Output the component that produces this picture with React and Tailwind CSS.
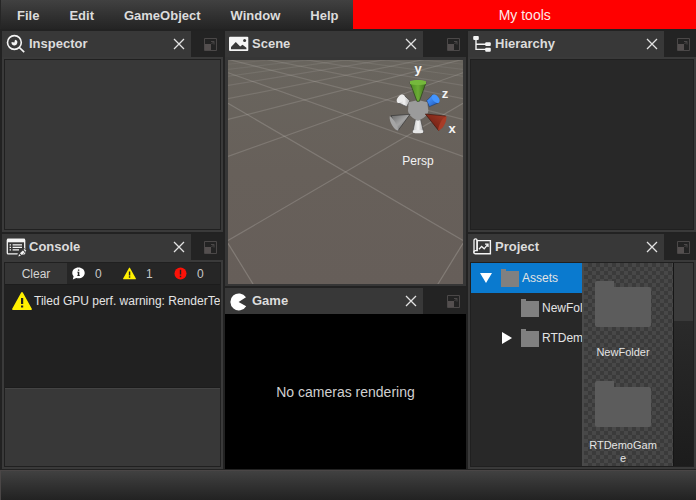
import React from "react";

const INK = "#f4f4f4";

function InspectorIcon() {
  return (
    <svg width="20" height="20" viewBox="0 0 20 20" fill="none" aria-hidden="true">
      <circle cx="8.4" cy="8.5" r="6.9" stroke={INK} strokeWidth="1.6" />
      <path d="M13.2 13.4L18.2 18.2" stroke={INK} strokeWidth="1.6" />
      <path d="M8.4 8.5L5.6 8a2.9 2.9 0 1 0 3.4-2.3z" fill={INK} />
    </svg>
  );
}

function SceneIcon() {
  return (
    <svg width="20" height="20" viewBox="0 0 20 20" aria-hidden="true">
      <rect x="0" y="2.7" width="19.3" height="14.4" rx="1" fill={INK} />
      <path d="M2 15.2V13L6.8 8l4.4 4.6 2.3-1.9 3.9 3v1.5z" fill="#383838" />
      <circle cx="15.6" cy="6.4" r="1.5" fill="#383838" />
    </svg>
  );
}

function ConsoleIcon() {
  return (
    <svg width="20" height="20" viewBox="0 0 20 20" fill="none" className="overflow-visible" aria-hidden="true">
      <rect x="1.3" y="2.3" width="17.4" height="14.6" rx="1" stroke={INK} strokeWidth="1.3" />
      <path d="M1 1.7h18v3.6H1z" fill={INK} />
      <path d="M3.6 7.9h1.4M3.6 10.4h1.4M3.6 12.9h1.4M6.6 7.9h9.4M6.6 10.4h9.4M6.6 12.9h6.4" stroke={INK} strokeWidth="1.1" />
      <path d="M10.6 21l1.2-4.6 6-5.6 3.6 3.4z" fill="#383838" />
      <path d="M12.4 19.4l.7-2.3 1.7 1.6zM13.9 16.2l3-2.7 1.9 1.8-3 2.7zM17.6 12.8l.9-.8 1.8 1.8-.9.9z" fill={INK} />
    </svg>
  );
}

function GameIcon() {
  return (
    <svg width="20" height="20" viewBox="0 0 20 20" aria-hidden="true">
      <path d="M9.6 10.9L17.2 15.2A8.5 8.5 0 1 1 17 6.3z" fill="#fff" />
    </svg>
  );
}

function HierarchyIcon() {
  return (
    <svg width="20" height="20" viewBox="0 0 20 20" fill="none" aria-hidden="true">
      <path d="M4 4v11.4h10M4 10.2h10" stroke={INK} strokeWidth="1.4" />
      <rect x="1.2" y="2" width="5.6" height="4" rx="1" fill={INK} />
      <rect x="13.2" y="8.2" width="5.6" height="3.9" rx="1" fill={INK} />
      <rect x="13.2" y="13.8" width="5.6" height="3.9" rx="1" fill={INK} />
    </svg>
  );
}

function ProjectIcon() {
  return (
    <svg width="20" height="20" viewBox="0 0 20 20" fill="none" aria-hidden="true">
      <path d="M5.2 3.6h13.2v13.2H3.4a1.6 1.6 0 0 1 0-3.2h1.8z" stroke={INK} strokeWidth="1.4" />
      <path d="M5 13.4V3.2A1.4 1.4 0 0 0 3.6 1.8 1.6 1.6 0 0 0 2 3.4v11.8" stroke={INK} strokeWidth="1.3" />
      <path d="M7 12.2l2.6-2.8 2.6 2.4 3.6-4.4M13 7.2h3v2.8" stroke={INK} strokeWidth="1.3" />
    </svg>
  );
}

function CloseIcon() {
  return (
    <svg width="12" height="12" viewBox="0 0 12 12" aria-hidden="true">
      <path d="M1 1l10 10M11 1L1 11" stroke="#e2e2e2" strokeWidth="1.3" />
    </svg>
  );
}

function MaximizeIcon() {
  return (
    <svg width="13" height="13" viewBox="0 0 13 13" fill="none" aria-hidden="true">
      <path d="M.5 .5h12v12H.5z" stroke="#4b4848" />
      <path d="M1 6h6v6H1z" fill="#544f4f" />
      <path d="M7 3.500h3v3M9.800 3.700L7.500 6" stroke="#4b4848" />
    </svg>
  );
}

function WarningIcon({ size }) {
  return (
    <svg width={size} height={size} viewBox="0 0 20 20" aria-hidden="true">
      <path d="M9.2 1.4a.9.9 0 0 1 1.6 0l9 16.4a.8.8 0 0 1-.7 1.2H.9a.8.8 0 0 1-.7-1.2z" fill="#fff000" />
      <path d="M9 7h2.2v6H9zM9 14.4h2.2v2.2H9z" fill="#222" />
    </svg>
  );
}

function InfoIcon() {
  return (
    <svg width="13" height="13" viewBox="0 0 13 13" aria-hidden="true">
      <path d="M6.5 .6c3.5 0 6.2 2.4 6.2 5.3s-2.7 5.3-6.2 5.3c-.8 0-1.5-.1-2.2-.3L.8 12.5l.8-3.3C.8 8.3 .3 7.2 .3 5.9 .3 3 3 .6 6.5 .6z" fill="#fff" />
      <path d="M5.9 2.4h1.4v1.4H5.9zM5.2 4.7h2.1v3.5h.6v.9H5.2v-.9h.6V5.6h-.6z" fill="#222" />
    </svg>
  );
}

function ErrorIcon() {
  return (
    <svg width="13" height="13" viewBox="0 0 13 13" aria-hidden="true">
      <circle cx="6.5" cy="6.5" r="6" fill="#fb1208" />
      <path d="M5.8 2.8h1.4v4.7H5.8zM5.8 8.7h1.4v1.5H5.8z" fill="#222" />
    </svg>
  );
}

function FolderIcon() {
  return (
    <svg width="18" height="18" viewBox="0 0 18 18" className="shrink-0" aria-hidden="true">
      <path d="M0 0h5v2h13v16H0z" fill="#808080" />
    </svg>
  );
}

function BigFolder() {
  return (
    <svg width="56" height="46" viewBox="0 0 56 46" aria-hidden="true">
      <path d="M2 0h17v6h35a2 2 0 0 1 2 2v36a2 2 0 0 1-2 2H2a2 2 0 0 1-2-2V2a2 2 0 0 1 2-2z" fill="#5c5c5c" />
    </svg>
  );
}

function Panel({ title, icon, stripClass = "w-8", grow, children }) {
  return (
    <section className={`flex min-h-0 basis-0 flex-col ${grow}`}>
      <header className="flex h-[26px] shrink-0 bg-[#232323]">
        <div className="flex min-w-0 flex-1 items-center bg-[#383838] pl-1">
          {icon}
          <h2 className="flex-1 truncate pl-[3px] text-[13px] leading-4 font-bold text-[#dcdcdc]">{title}</h2>
          <button type="button" aria-label={`Close ${title}`} className="mr-1 flex size-4 items-center justify-center">
            <CloseIcon />
          </button>
        </div>
        <div className={`flex shrink-0 items-center justify-end pr-[6px] ${stripClass}`}>
          <button type="button" aria-label={`Maximize ${title}`}>
            <MaximizeIcon />
          </button>
        </div>
      </header>
      {children}
    </section>
  );
}

function Body({ className = "", children }) {
  return (
    <div className="flex min-h-0 flex-1 flex-col bg-[#3a3a3a] p-[2px]">
      <div className={`flex min-h-0 flex-1 border border-[#202020] ${className}`}>{children}</div>
    </div>
  );
}

// Ground plane: two mirrored pencils of lines running to vanishing points above the view.
const GRID = Array.from({ length: 9 }, (_, i) => {
  const depth = 1 / (0.00682 + (i - 1) * 0.004374);
  const slope = depth / 251;
  return { left: depth - 35 + slope * 118, right: depth - 35 - slope * 117, fade: Math.max(0.07, 0.27 - i * 0.025) };
});

function SceneView() {
  return (
    <div className="relative min-h-0 flex-1 overflow-hidden bg-linear-to-b from-[#69655e] via-[#67605a] to-[#665e59]">
      <svg className="absolute inset-0 size-full" viewBox="0 0 235 224" preserveAspectRatio="xMidYMid slice" aria-hidden="true">
        {GRID.map((line, i) => (
          <g key={i} stroke="#cfcac5" strokeWidth="1.2" strokeOpacity={line.fade}>
            <path d={`M0 ${line.left}L235 ${line.right}`} />
            <path d={`M235 ${line.left}L0 ${line.right}`} />
          </g>
        ))}
      </svg>
      <div className="absolute top-0 right-0 w-[90px] text-center text-xs leading-[18px] text-[#f2f2f2]">
        <Gizmo />
        <button type="button" className="block w-full">Persp</button>
      </div>
    </div>
  );
}

function Gizmo() {
  return (
    <svg width="90" height="92" viewBox="0 0 90 92" className="block" aria-label="Orientation">
      <defs>
        <linearGradient id="green"><stop offset="0" stopColor="#4a8a22" /><stop offset=".5" stopColor="#6cac35" /><stop offset="1" stopColor="#3c6f1b" /></linearGradient>
        <linearGradient id="blue" x2="1" y2="1"><stop offset=".3" stopColor="#3f8df8" /><stop offset="1" stopColor="#1f54ad" /></linearGradient>
        <linearGradient id="red" x1="1" y1="0" x2="0" y2="1"><stop offset="0" stopColor="#a23a26" /><stop offset="1" stopColor="#64190e" /></linearGradient>
        <linearGradient id="gray" x2="1" y2="1"><stop offset="0" stopColor="#666" /><stop offset=".5" stopColor="#a3a3a3" /><stop offset="1" stopColor="#454545" /></linearGradient>
        <linearGradient id="white"><stop offset="0" stopColor="#bdbdbd" /><stop offset=".5" stopColor="#f2f2f2" /><stop offset="1" stopColor="#aaa" /></linearGradient>
      </defs>
      <g transform="translate(7 2) scale(.3333)" strokeLinejoin="round">
        <path d="M90 116L70 98 54 122 80 134z" fill="url(#white)" stroke="#444" strokeWidth="2" />
        <ellipse cx="62" cy="110" rx="9" ry="15" transform="rotate(42 62 110)" fill="#ececec" />
        <path d="M140 116L158 98 176 122 148 134z" fill="url(#blue)" stroke="#243c66" strokeWidth="2" />
        <ellipse cx="167" cy="110" rx="9" ry="15" transform="rotate(-42 167 110)" fill="#4395ff" />
        <path d="M106 173h16l9 38h-33z" fill="url(#white)" stroke="#444" strokeWidth="2" />
        <path d="M98 206c8-4 24-4 32 0l-1 6c-8 2-22 2-30 0z" fill="#e6e6e6" />
        <path d="M86 121L114 114 142 121 145 146C144 160 128 170 114 176 100 170 86 160 84 146z" fill="#9b9b9b" />
        <path d="M90 157L33 161 54 206z" fill="url(#gray)" stroke="#333" strokeWidth="2" />
        <path d="M29 163c8 0 26 30 26 43-12 0-28-26-26-43z" fill="#a5a5a5" />
        <path d="M136 156L197 162 176 206z" fill="url(#red)" stroke="#3c130c" strokeWidth="2" />
        <path d="M199 162c3 16-11 42-25 44 1-14 12-40 25-44z" fill="#a83c27" />
        <path d="M90 62h48L118 118h-7z" fill="url(#green)" stroke="#263d17" strokeWidth="2" />
        <path d="M90 58c12-5 36-5 48 0v8c-12 4-36 4-48 0z" fill="#75b83c" />
      </g>
      <g fill="#f4f4f4" fontSize="13" fontWeight="700" textAnchor="middle">
        <text x="45" y="13">y</text>
        <text x="72" y="38">z</text>
        <text x="79" y="73">x</text>
      </g>
    </svg>
  );
}

function Counter({ icon, label, count }) {
  return (
    <button type="button" aria-label={`${count} ${label}`} className="flex w-[51px] shrink-0 items-center gap-[10px] pl-[5px]">
      {icon}
      <span>{count}</span>
    </button>
  );
}

function TreeRow({ name, indent, arrow, selected }) {
  return (
    <li className={`flex h-[30px] items-center overflow-hidden whitespace-nowrap ${indent} ${selected ? "bg-[#0a7acf]" : ""}`}>
      <span className="flex w-[21px] shrink-0">
        {arrow && (
          <button type="button" aria-label={`Toggle ${name}`}>
            <svg width="12" height="12" viewBox="0 0 12 12" aria-hidden="true">
              <path d={arrow === "down" ? "M0 1h12L6 11z" : "M2 0l10 6-10 6z"} fill="#fff" />
            </svg>
          </button>
        )}
      </span>
      <FolderIcon />
      <span className="pl-[3px]">{name}</span>
    </li>
  );
}

function Asset({ name }) {
  return (
    <li className="flex h-[100px] w-[72px] shrink-0 flex-col items-center gap-3">
      <BigFolder />
      <span className="flex h-[26px] w-full items-center">
        <span className="w-full text-center text-[11px] leading-[13px] break-all">{name}</span>
      </span>
    </li>
  );
}

const MENUS = ["File", "Edit", "GameObject", "Window", "Help"];

export default function App() {
  return (
    <div className="flex h-screen flex-col overflow-hidden bg-[#222222] font-['Liberation_Sans',Arial,sans-serif] text-[#e4e4e4]">
      <nav className="flex h-[29px] shrink-0 border-l border-[#262626] bg-linear-to-b from-[#414141] to-[#242424] pl-px">
        {MENUS.map((name) => (
          <button key={name} type="button" className="px-[15px] pt-[2px] text-[13px] leading-4 font-bold text-[#dcdcdc]">{name}</button>
        ))}
        <button type="button" className="flex-1 bg-[#ff0000] text-sm leading-4 text-[#fbeaea]">My tools</button>
      </nav>

      <main className="grid min-h-0 flex-1 grid-cols-[221fr_241fr_228fr] gap-[2px] pt-[2px] pb-px pl-[2px]">
        <div className="flex min-h-0 min-w-0 flex-col gap-[2px]">
          <Panel title="Inspector" icon={<InspectorIcon />} grow="grow-[201]">
            <Body className="bg-[#383838]" />
          </Panel>
          <Panel title="Console" icon={<ConsoleIcon />} grow="grow-[235]">
            <Body className="flex-col text-xs">
              <div className="flex h-[21px] shrink-0 bg-[#262626] text-[#c8c8c8]">
                <button type="button" className="w-[62px] bg-[#353535] text-[#d4d4d4]">Clear</button>
                <Counter icon={<InfoIcon />} label="messages" count={0} />
                <Counter icon={<WarningIcon size={13} />} label="warnings" count={1} />
                <Counter icon={<ErrorIcon />} label="errors" count={0} />
              </div>
              <ul className="min-h-0 flex-[104] border-y border-[#1c1c1c] bg-[#212121]">
                <li className="flex h-8 items-center gap-[2px] overflow-hidden pl-[7px] whitespace-nowrap">
                  <span className="shrink-0"><WarningIcon size={20} /></span>
                  <span>Tiled GPU perf. warning: RenderTexture</span>
                </li>
              </ul>
              <div className="min-h-0 flex-[78] border-t border-[#444] bg-[#383838]" />
            </Body>
          </Panel>
        </div>

        <div className="flex min-h-0 min-w-0 flex-col gap-[2px]">
          <Panel title="Scene" icon={<SceneIcon />} stripClass="w-[43px]" grow="grow-[255]">
            <div className="flex min-h-0 flex-1 border-3 border-b-2 border-[#363636]">
              <SceneView />
            </div>
          </Panel>
          <Panel title="Game" icon={<GameIcon />} stripClass="w-[43px]" grow="grow-[181]">
            <div className="flex min-h-0 flex-1 items-center justify-center bg-black">
              <p className="text-sm text-[#d0d0d0]">No cameras rendering</p>
            </div>
          </Panel>
        </div>

        <div className="flex min-h-0 min-w-0 flex-col gap-[2px]">
          <Panel title="Hierarchy" icon={<HierarchyIcon />} grow="grow-[201]">
            <Body className="bg-[#282828]" />
          </Panel>
          <Panel title="Project" icon={<ProjectIcon />} grow="grow-[235]">
            <Body className="bg-[#282828]">
              <ul className="min-w-0 flex-1 overflow-hidden text-xs">
                <TreeRow name="Assets" indent="pl-[9px]" arrow="down" selected />
                <TreeRow name="NewFolder" indent="pl-[29px]" />
                <TreeRow name="RTDemoGame" indent="pl-[29px]" arrow="right" />
              </ul>
              <ul className="flex w-[91px] shrink-0 flex-col overflow-hidden border-l-2 border-[#4a4a4a] bg-[repeating-conic-gradient(#3b3b3b_0_25%,#484848_0_50%)] bg-[length:8px_8px] pt-[18px] pl-[3px]">
                <Asset name="NewFolder" />
                <Asset name="RTDemoGame" />
              </ul>
              <div className="w-5 shrink-0 border-l border-[#161616] bg-linear-to-b from-[#303030] to-[#1c1c1c]">
                <div className="h-[58px] bg-[#3a3a3a]" />
              </div>
            </Body>
          </Panel>
        </div>
      </main>

      <footer className="h-[30px] shrink-0 border-t border-l border-[#4a4646] bg-linear-to-b from-[#414141] to-[#222222]" />
    </div>
  );
}
